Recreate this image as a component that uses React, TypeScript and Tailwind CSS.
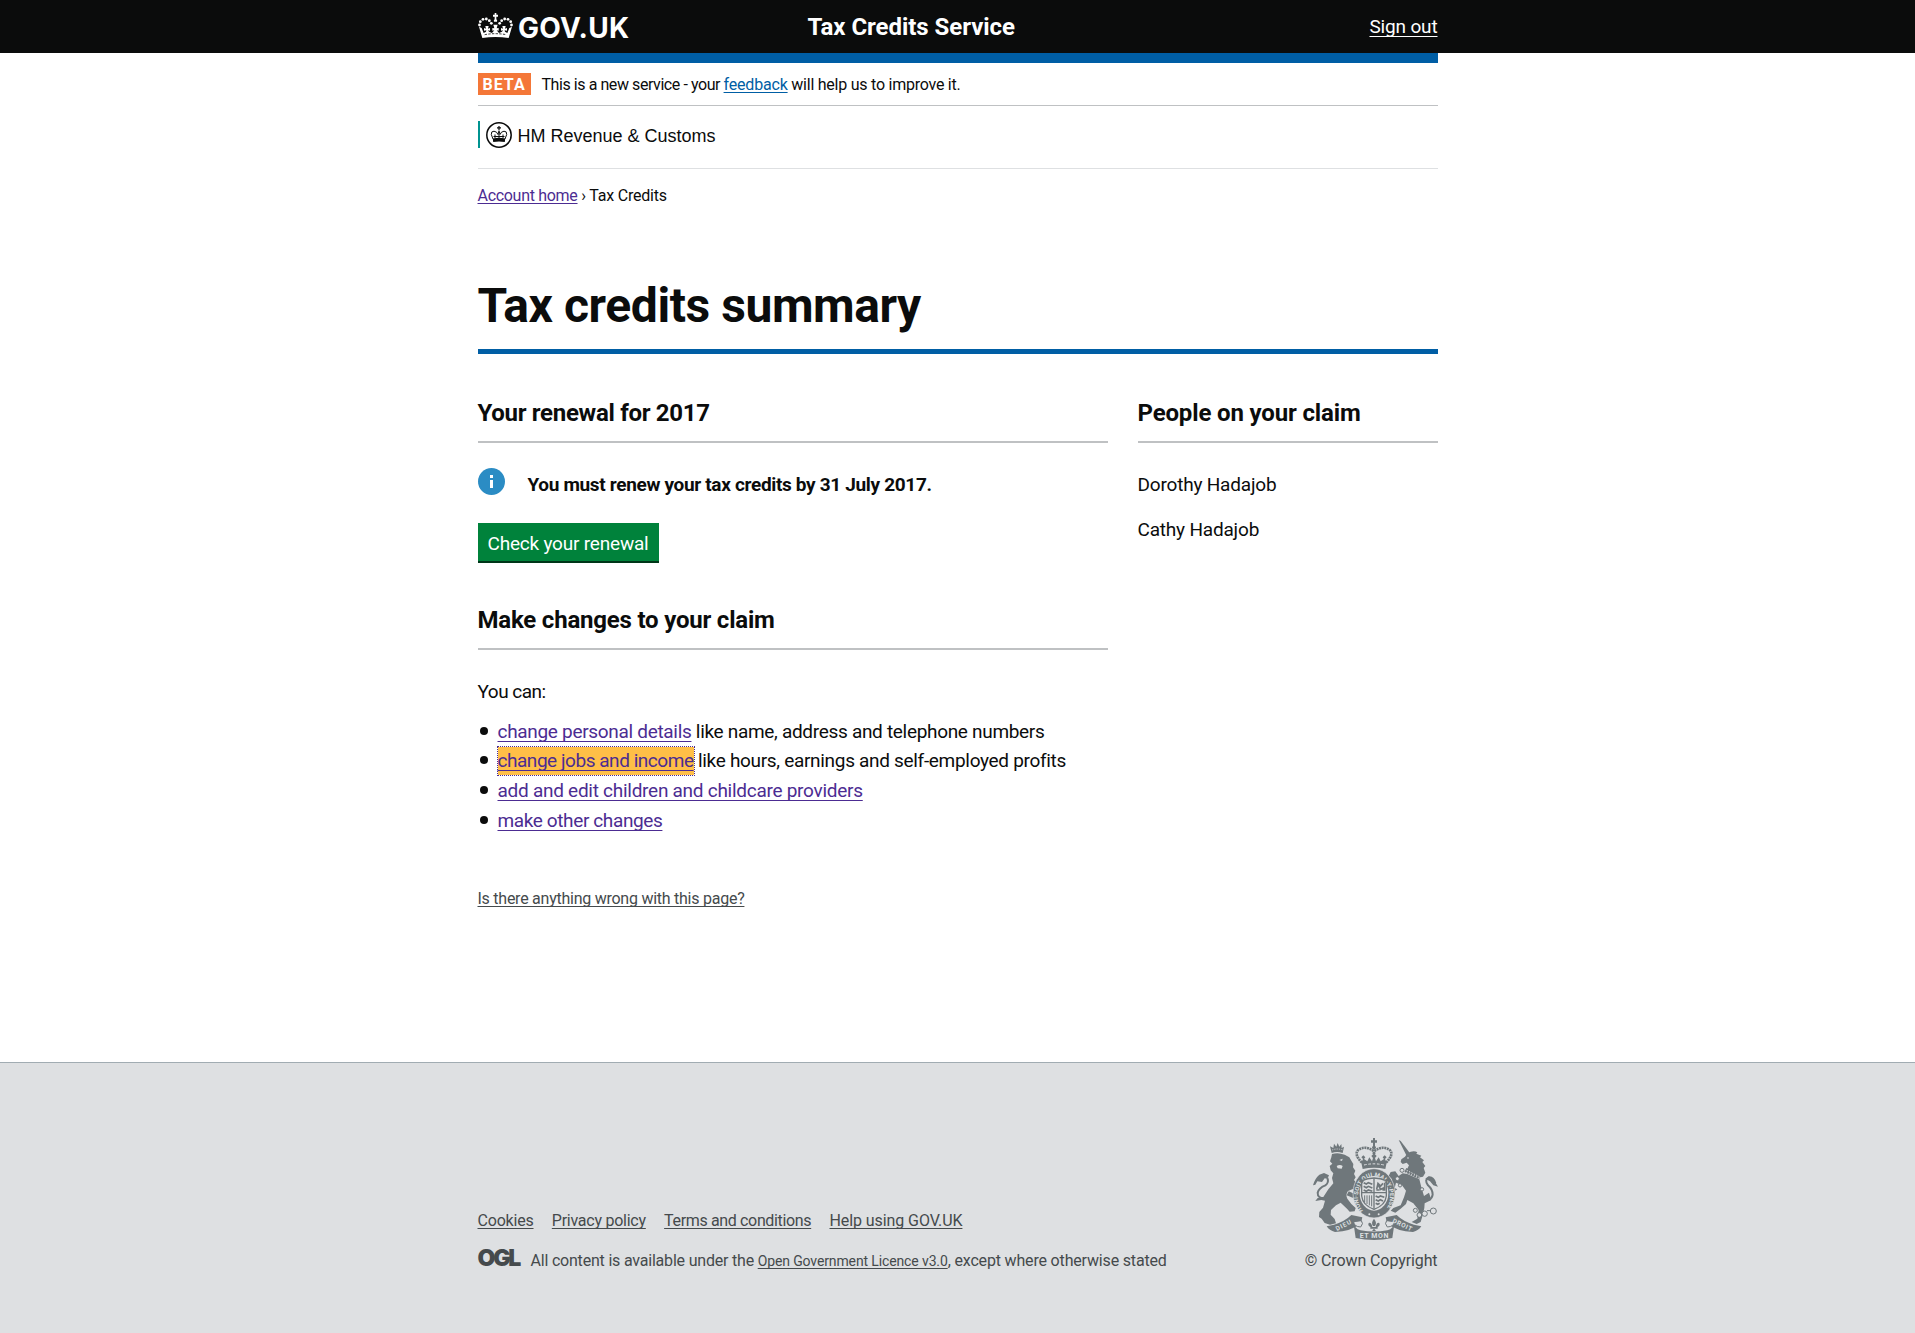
import type { ReactNode } from "react";

const ARCH_PEARLS = [
  [28.5, 75],
  [31, 65],
  [39, 58],
  [49, 57],
  [58, 62],
  [64, 70],
];

function HeaderCrown() {
  return (
    <svg viewBox="24 39 105 75" className="h-[25px] w-[35px] fill-white">
      <path d="M74 39h5v5h5v6h-5v8q4 2 2 7h-9q-2-5 2-7v-8h-5v-6h5z" />
      {ARCH_PEARLS.map(([x, y]) => (
        <g key={x}>
          <circle cx={x} cy={y} r="4.200" />
          <circle cx={153 - x} cy={y} r="4.200" />
        </g>
      ))}
      <path d="M27 80L35 84L41 99L48 95L49 91L42 92V84L48 86L46 78H56L54 86L60 84V92L54 91L57 95L66 99L73 91L67 92V84L73 85L70 74H83L80 85L86 84V92L80 91L87 99L96 95L99 91L93 92V84L99 86L97 78H107L105 86L111 84V92L104 91L105 95L112 99L118 84L126 80L116 114Q76 108 37 114Z" />
      <path
        d="M44 104Q76 98 109 104"
        fill="none"
        stroke="#0b0c0c"
        strokeWidth="2.500"
        strokeDasharray="7 4"
      />
    </svg>
  );
}

function DepartmentCrown() {
  return (
    <svg viewBox="0 0 26 26" className="mt-[0.500px] size-[26px] fill-[#0b0c0c]">
      <circle cx="13" cy="13" r="12.200" fill="none" stroke="#0b0c0c" strokeWidth="1.500" />
      <path d="M12.400 4h1.200v1.200h1.400v1.200h-1.400v2h-1.200v-2H11V5.200h1.400z" />
      <path
        d="M7 17L5.300 12.500Q5 9 8 9.200Q11 9.500 12 12.500L13 9L14 12.500Q15 9.500 18 9.200Q21 9 20.700 12.500L19 17M9 12.500V16M13 12V16M17 12.500V16M7.500 14.500H18.500"
        fill="none"
        stroke="#0b0c0c"
        strokeWidth="1"
      />
      <path d="M6.800 16.500Q13 15 19.200 16.500L18.800 20Q13 18.800 7.200 20Z" />
    </svg>
  );
}

function RoyalCrest() {
  return (
    <svg viewBox="69 54 375 306" className="h-[102px] w-[125px]" fill="#6f777b">
      {/* crown */}
      <path d="M249 54h6v7h6v7h-6v10q6 4 0 10h-6q-6-6 0-10V68h-6v-7h6z" />
      <path
        d="M216 128Q190 102 206 89Q226 76 249 92Q252 98 252 104M288 128Q314 102 298 89Q278 76 255 92Q252 98 252 104"
        fill="none"
        stroke="#6f777b"
        strokeWidth="8"
        strokeDasharray="6 2"
      />
      <path d="M214 128L219 117L214 112L220 106L226 112L222 117L232 124L238 112L246 124L249 114L244 108L252 100L260 108L255 114L258 124L266 112L272 124L282 117L278 112L284 106L290 112L285 117L290 128L286 147Q252 139 218 147Z" />
      <path d="M222 135Q252 128 282 135" fill="none" stroke="#dee0e2" strokeWidth="3" strokeDasharray="8 5" />

      {/* lion */}
      <path d="M125 99L120 79L130 84L132 71L139 80L143 69L148 80L154 72L155 84L162 80L158 99Q141 93 125 99Z" />
      <path d="M126 90Q141 84 159 90" fill="none" stroke="#dee0e2" strokeWidth="2" strokeDasharray="4 3" />
      <path d="M126 102Q144 96 164 104L178 112L184 122L190 132L189 142L196 152L192 162L197 172L192 180L203 194L213 206L202 214L189 207L174 213Q166 224 172 236L184 252L197 264L194 274L179 275L171 266L152 248L138 256L123 270L122 284L134 297L138 310L120 314L104 309L95 296L87 291L88 276L99 263L105 242L94 240L76 243L83 234L100 231L115 208L130 190L126 174L130 160L122 151L119 138L127 131L120 124L124 112Z" />
      <path d="M148 120L158 116L156 123ZM140 138Q150 132 158 138L155 146L143 145Z" fill="#dee0e2" />
      <path d="M176 214L194 222L198 232L188 233L170 226Z" />
      <path d="M106 234Q82 236 83 218Q86 204 106 196Q118 188 112 174" fill="none" stroke="#6f777b" strokeWidth="6" />
      <path d="M69 196Q74 176 88 164L102 159L117 166L112 176L104 175L96 186L82 184L76 194Z" />

      {/* unicorn */}
      <path d="M326 60L332 63L360 100L349 106Z" />
      <path d="M352 100Q370 90 382 97L379 101L394 107L390 112L402 121L397 126L406 138L401 144L406 158L399 170L392 172L370 164L348 154L357 136L350 128L338 132L332 126L334 118L345 110Z" />
      <circle cx="354" cy="114" r="2.500" fill="#dee0e2" />
      <path d="M346 150L390 172" stroke="#6f777b" strokeWidth="13" strokeDasharray="6 2" />
      <path d="M350 151L388 170" stroke="#dee0e2" strokeWidth="3" strokeDasharray="4 4" />
      <path d="M338 160L352 162L388 178L394 202L402 228L417 218L424 240L404 250L403 264L398 286L392 306L380 312L365 306L382 296L386 270L370 250L352 240L348 252L332 266L316 278L302 272L310 264L332 256L342 232L348 212L336 196L318 188L314 204L322 208L316 212L306 196L306 178L296 168L302 156L316 154L326 168Z" />
      <path d="M400 236Q424 246 428 224Q428 208 414 196Q402 180 416 172Q430 170 436 190" fill="none" stroke="#6f777b" strokeWidth="6" />
      <path d="M406 176Q420 164 432 180L444 200L430 196L420 184Z" />

      {/* garter and shield */}
      <ellipse cx="252" cy="220" rx="63" ry="74" stroke="#dee0e2" strokeWidth="2" />
      <path id="motto" d="M219 272A48 59 0 1 1 285 272" fill="none" />
      <text className="font-[Roboto,sans-serif] font-bold" fontSize="18" fill="#dee0e2">
        <textPath href="#motto" textLength="250">
          HONI·SOIT QUI MAL·Y·PENSE
        </textPath>
      </text>
      <ellipse cx="252" cy="220" rx="43" ry="52" fill="#dee0e2" />
      <path d="M215 182Q252 166 289 182V228Q286 256 252 268Q218 256 215 228Z" fill="none" stroke="#6f777b" strokeWidth="4" />
      <path d="M252 174V266M214 218H290" stroke="#6f777b" strokeWidth="4" />
      <g fill="none" stroke="#6f777b" strokeWidth="5">
        <path d="M221 188l8 4 6-4 12 5M221 199l8 4 6-4 12 5M221 210l8 4 6-4 12 4" />
        <path d="M260 208l4-18 8 8 7-8M264 194l8 14 9-4-2 8M259 210h10M284 188v24" />
        <path d="M257 228l8 4 6-4 12 4M257 239l8 4 6-4 8 4M257 250l6 3 6-3" />
        <path d="M224 226V246M231 226V252M238 226V256M245 226V259" strokeWidth="3" />
      </g>
      <circle cx="238" cy="283" r="3" fill="#dee0e2" />
      <circle cx="266" cy="283" r="3" fill="#dee0e2" />

      {/* chain */}
      <g fill="#dee0e2" stroke="#6f777b" strokeWidth="3">
        <circle cx="336" cy="151" r="6" />
        <circle cx="322" cy="176" r="6" />
        <circle cx="330" cy="196" r="5" />
        <circle cx="396" cy="208" r="5" />
        <circle cx="376" cy="271" r="6" />
        <circle cx="388" cy="285" r="7" />
        <circle cx="404" cy="281" r="8" />
        <circle cx="430" cy="273" r="9" />
        <path d="M411 272L421 272" />
      </g>

      {/* motto ribbon */}
      <path d="M110 319L132 314Q165 304 184 285L217 292L213 310Q182 335 135 336Q118 332 110 319Z" />
      <path d="M394 319L372 314Q339 304 320 285L287 292L291 310Q322 335 369 336Q386 332 394 319Z" />
      <path d="M190 306Q192 326 212 331Q252 338 292 331Q312 326 314 306L307 354Q252 366 197 354Z" />
      <path d="M191 305Q192 320 212 321Q222 310 214 302ZM313 305Q312 320 292 321Q282 310 290 302Z" fill="#dee0e2" stroke="#6f777b" strokeWidth="3" />
      <g className="font-[Roboto,sans-serif] font-bold" fill="#dee0e2" fontSize="19">
        <text transform="translate(141 333) rotate(-27)" textLength="50">DIEU</text>
        <text transform="translate(306 307) rotate(25)" textLength="62">DROIT</text>
        <text x="209" y="354" fontSize="21" textLength="86">ET MON</text>
      </g>
      <path d="M252 296Q262 308 255 318H249Q242 308 252 296ZM247 320Q244 306 236 309Q232 318 243 322ZM257 320Q260 306 268 309Q272 318 261 322ZM241 321H263V326H241ZM252 326L258 333H246Z" />
    </svg>
  );
}

function Link({ children, className }: { children: ReactNode; className: string }) {
  return (
    <a href="#" className={`underline decoration-1 [text-decoration-skip-ink:none] ${className}`}>
      {children}
    </a>
  );
}

function SectionHeading({ children, className }: { children: ReactNode; className: string }) {
  return (
    <h2 className={`border-b-2 border-[#bfc1c3] pb-[13px] text-2xl leading-[30px] font-bold ${className}`}>
      {children}
    </h2>
  );
}

function ListItem({ children }: { children: ReactNode }) {
  return (
    <li className="flex h-[25px] items-start whitespace-pre">
      <span className="mt-[8px] mr-[9.500px] ml-[2.500px] size-[8px] rounded-full bg-[#0b0c0c]" />
      <span>{children}</span>
    </li>
  );
}

export default function App() {
  return (
    <div className="flex min-h-[1333px] flex-col bg-white font-[Roboto,'Liberation_Sans',sans-serif] text-[19px] leading-[25px] text-[#0b0c0c]">
      <header className="h-[53px] bg-[#0b0c0c] text-white">
        <div className="mx-auto flex w-[960px] items-start">
          <div className="flex w-[330px] items-start gap-[5.500px] pt-[13px]">
            <HeaderCrown />
            <span className="font-[Inter,sans-serif] text-[28px] leading-[30px] font-bold tracking-[0.300px]">GOV.UK</span>
          </div>
          <span className="pt-[12px] text-2xl leading-[30px] font-bold tracking-[-0.050px]">Tax Credits Service</span>
          <Link className="mt-[14px] ml-auto tracking-[-0.160px] underline-offset-[3px]">Sign out</Link>
        </div>
      </header>

      <main className="mx-auto w-[960px]">
        <div className="h-[10px] bg-[#005ea5]" />
        <div className="flex h-[43px] items-start gap-[11px] border-b border-[#bfc1c3] pt-[10px] text-base leading-[22px]">
          <span className="h-[22px] w-[53px] bg-[#f47738] pl-[5px] leading-[24px] font-bold tracking-[1px] text-white">BETA</span>
          <p className="leading-[24px] whitespace-pre">
            <span className="tracking-[-0.430px]">This is a new service - your </span>
            <Link className="tracking-[-0.190px] text-[#005ea5] underline-offset-2">feedback</Link>
            <span className="tracking-[-0.240px]"> will help us to improve it.</span>
          </p>
        </div>

        <div className="h-[63px] border-b border-[#dee0e2] pt-[15px]">
          <div className="flex h-[27px] items-start border-l-2 border-[#009390] pl-[6px]">
            <DepartmentCrown />
            <span className="ml-[6px] pt-px font-['Liberation_Sans',sans-serif] text-lg leading-[28px]">HM Revenue &amp; Customs</span>
          </div>
        </div>

        <nav className="mt-[17px] text-base leading-5 tracking-[-0.300px]">
          <Link className="text-[#4c2c92] underline-offset-2">Account home</Link>
          <span className="tracking-[-0.220px]"> › Tax Credits</span>
        </nav>

        <h1 className="mt-[75px] border-b-[5px] border-[#005ea5] pb-[18px] text-5xl leading-[50px] font-bold tracking-[-0.430px]">
          Tax credits summary
        </h1>

        <div className="mt-[44px] flex gap-[30px]">
          <div className="w-[630px]">
            <SectionHeading className="tracking-[-0.300px]">Your renewal for 2017</SectionHeading>
            <div className="mt-[25px] flex items-start gap-[23px]">
              <svg viewBox="0 0 27 27" className="size-[27px]">
                <circle cx="13.500" cy="13.500" r="13.500" fill="#2b8cc4" />
                <path d="M12 7h3v3h-3zM12 12h3v8h-3z" fill="#fff" />
              </svg>
              <p className="pt-1 font-bold tracking-[-0.330px]">You must renew your tax credits by 31 July 2017.</p>
            </div>
            <button className="mt-[26px] block h-[40px] w-[181px] border-b-2 border-[#003618] bg-[#00823b] pt-[2px] tracking-[-0.200px] whitespace-nowrap text-white">
              Check your renewal
            </button>

            <SectionHeading className="mt-[42px] tracking-[-0.200px]">Make changes to your claim</SectionHeading>
            <p className="mt-[29px] tracking-[-0.500px]">You can:</p>
            <ul className="mt-[14.600px] flex flex-col gap-[4.670px] tracking-[-0.310px]">
              <ListItem>
                <Link className="text-[#4c2c92] underline-offset-[3px]">change personal details</Link> like name, address and telephone numbers
              </ListItem>
              <ListItem>
                <Link className="bg-[#ffbf47] pt-[2px] pb-[3px] tracking-[-0.460px] text-[#4c2c92] underline-offset-[3px] outline-1 outline-[#4c2c92] outline-dotted">
                  change jobs and income
                </Link>{" "}
                like hours, earnings and self-employed profits
              </ListItem>
              <ListItem>
                <Link className="tracking-[-0.270px] text-[#4c2c92] underline-offset-[3px]">add and edit children and childcare providers</Link>
              </ListItem>
              <ListItem>
                <Link className="tracking-[-0.380px] text-[#4c2c92] underline-offset-[3px]">make other changes</Link>
              </ListItem>
            </ul>
            <p className="mt-[56.400px] text-base leading-5 tracking-[-0.250px]">
              <Link className="text-[#454a4c] underline-offset-2">Is there anything wrong with this page?</Link>
            </p>
          </div>

          <div className="w-[300px]">
            <SectionHeading className="tracking-[-0.150px]">People on your claim</SectionHeading>
            <ul className="mt-[29px] flex flex-col gap-5 tracking-[-0.190px]">
              <li>Dorothy Hadajob</li>
              <li>Cathy Hadajob</li>
            </ul>
          </div>
        </div>
      </main>

      <footer className="mt-[152.600px] flex-1 border-t border-[#a1acb2] bg-[#dee0e2] text-base leading-5 text-[#454a4c]">
        <div className="mx-auto flex w-[960px] items-start justify-between">
          <div className="pt-[148px]">
            <div className="flex gap-[18.300px]">
              <Link className="tracking-[-0.200px] underline-offset-2">Cookies</Link>
              <Link className="tracking-[-0.250px] underline-offset-2">Privacy policy</Link>
              <Link className="tracking-[-0.350px] underline-offset-2">Terms and conditions</Link>
              <Link className="tracking-[-0.080px] underline-offset-2">Help using GOV.UK</Link>
            </div>
            <div className="mt-5 flex items-start">
              <span className="-mt-[2px] w-[53px] font-[Inter,sans-serif] text-[23px] leading-[18px] font-black tracking-[-2.200px]">OGL</span>
              <p className="whitespace-pre">
                <span className="tracking-[-0.200px]">All content is available under the </span>
                <Link className="text-sm leading-5 tracking-[-0.125px] underline-offset-2">Open Government Licence v3.0</Link>
                <span className="tracking-[-0.170px]">, except where otherwise stated</span>
              </p>
            </div>
          </div>
          <div className="flex flex-col items-end pt-[75px]">
            <RoyalCrest />
            <span className="mt-[11px] tracking-[-0.100px]">© Crown Copyright</span>
          </div>
        </div>
      </footer>
    </div>
  );
}
